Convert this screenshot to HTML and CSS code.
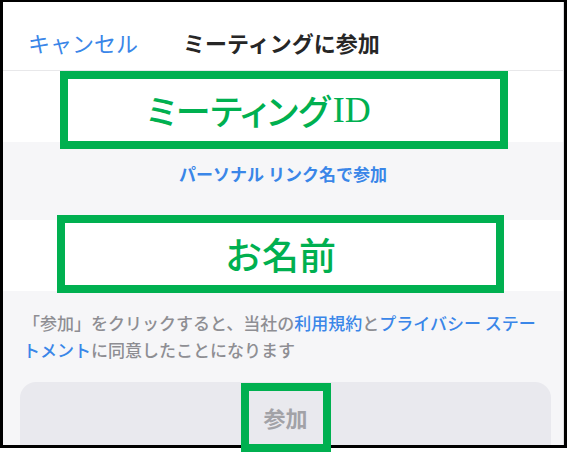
FILE: index.html
```html
<!DOCTYPE html>
<html lang="ja">
<head>
<meta charset="utf-8">
<title>ミーティングに参加</title>
<link rel="stylesheet" href="styles.css">
</head>
<body>
<div class="canvas">
  <div class="frame">
    <div class="screen">
      <header class="nav">
        <span class="cancel">キャンセル</span>
        <span class="title">ミーティングに参加</span>
      </header>
      <div class="field"></div>
      <div class="band"><span class="link">パーソナル リンク名で参加</span></div>
      <div class="field"></div>
      <div class="bottom">
        <p class="terms">「参加」をクリックすると、当社の<span class="a">利用規約</span>と<span class="a">プライバシー ステー<br>トメント</span>に同意したことになります</p>
        <div class="join">参加</div>
      </div>
    </div>
  </div>
  <div class="mark mark-id"><span class="kana">ミーティング</span><span class="latin">ID</span></div>
  <div class="mark mark-name">お名前</div>
  <div class="mark mark-join"></div>
</div>
</body>
</html>
```

FILE: styles.css
```css
* { box-sizing: border-box; margin: 0; padding: 0; }
html, body { background: #fff; }
body {
  width: 568px;
  height: 452px;
  overflow: hidden;
  font-family: "Noto Sans CJK JP", "Noto Sans", sans-serif;
}
.canvas { position: relative; width: 568px; height: 452px; }
.frame {
  width: 567px;
  height: 448px;
  border: 3px solid #000;
  border-top-width: 2px;
  overflow: hidden;
}
.screen {
  height: 100%;
  background: #f6f6f8;
  border-right: 1px solid #dcdcde;
  display: flex;
  flex-direction: column;
}
.nav {
  height: 69px;
  flex: none;
  background: #fff;
  border-bottom: 1px solid #e8e8ea;
  display: flex;
  align-items: center;
  padding: 12px 0 0 25px;
  gap: 45px;
  font-size: 22px;
  line-height: 30px;
}
.cancel { color: #3a86e8; }
.title { color: #262626; font-weight: 700; }
.field { height: 71px; flex: none; background: #fff; }
.band {
  height: 78px;
  flex: none;
  text-align: center;
  padding-top: 20px;
  font-size: 17px;
  line-height: 24px;
}
.link { color: #3a86e8; font-weight: 700; }
.bottom {
  flex: 1;
  padding: 18px 12px 0 17px;
}
.terms {
  padding-left: 3px;
  font-size: 17px;
  line-height: 27px;
  color: #8e8e93;
  font-weight: 500;
  white-space: nowrap;
}
.terms .a { color: #3a86e8; }
.join {
  margin-top: 19px;
  height: 80px;
  border-radius: 16px;
  background: #e9e9ee;
  text-align: center;
  padding-top: 20px;
  font-size: 22px;
  line-height: 30px;
  font-weight: 700;
  color: #a2a2a7;
}
.mark {
  position: absolute;
  border: 8px solid #00b050;
  display: flex;
  align-items: center;
  color: #00b050;
  font-weight: 500;
}
.mark-id {
  left: 60px;
  top: 71px;
  width: 448px;
  height: 78px;
  padding-left: 79px;
  font-size: 35px;
  line-height: 44px;
}
.mark-id .kana { font-feature-settings: "palt"; }
.mark-id .latin { font-family: "Liberation Serif", "DejaVu Serif", serif; font-weight: 400; font-size: 36px; margin-left: 3px; }
.mark-name {
  left: 57px;
  top: 215px;
  width: 447px;
  height: 78px;
  justify-content: center;
  font-size: 37px;
  line-height: 46px;
}
.mark-join {
  left: 241px;
  top: 383px;
  width: 90px;
  height: 69px;
}
```
